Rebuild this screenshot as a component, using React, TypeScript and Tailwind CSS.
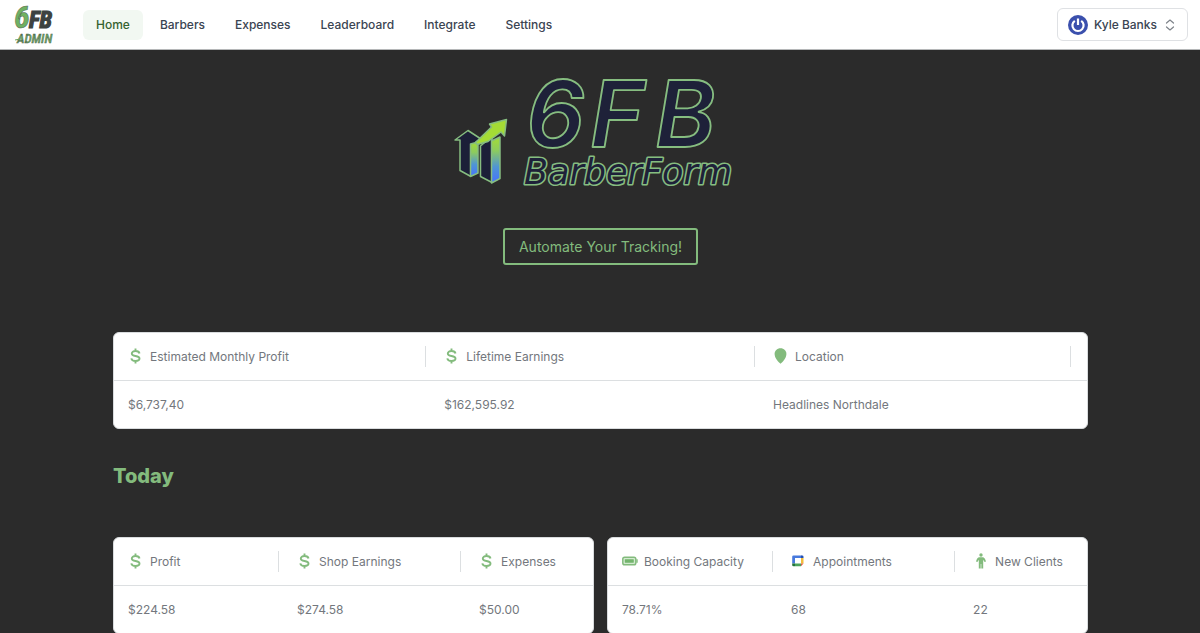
import type { ReactNode } from "react";

type Column = { icon: ReactNode; label: string; value: string; width: string; divided: boolean };

function DollarIcon() {
  return (
    <svg viewBox="0 0 16 16" className="size-4 shrink-0" fill="none" stroke="#83bb7d" strokeWidth="1.9" aria-hidden="true">
      <path d="M7.500.5v2.700M7.500 12.800v2.700M11.500 5.500C11.200 3.900 9.700 3 7.500 3 5.200 3 3.800 4 3.800 5.500c0 1.600 1.300 2.100 3.700 2.500 2.600.45 4 1 4 2.600C11.500 12.200 9.900 13 7.500 13c-2.400 0-3.900-1-4.200-2.700" />
    </svg>
  );
}

function PinIcon() {
  return (
    <svg viewBox="0 0 16 16" className="size-4 shrink-0" fill="#83bb7d" aria-hidden="true">
      <path d="M7.500.3c3.500 0 5.900 2.500 5.900 5.700 0 3.600-2.900 7.300-5.900 9.800-3-2.500-5.900-6.200-5.900-9.800C1.600 2.800 4 .3 7.500.3z" />
    </svg>
  );
}

function BatteryIcon() {
  return (
    <svg viewBox="0 0 16 16" className="size-4 shrink-0" fill="none" aria-hidden="true">
      <rect x=".8" y="4.200" width="13" height="7.600" rx="1.800" fill="#d3ead0" stroke="#83bb7d" strokeWidth="1.500" />
      <rect x="2.800" y="6.300" width="9" height="3.400" rx=".4" fill="#74b56d" />
      <path d="M15 6.200v3.600" stroke="#83bb7d" strokeWidth="1.400" />
    </svg>
  );
}

function CalendarIcon() {
  return (
    <svg viewBox="0 0 16 16" className="size-4 shrink-0" aria-hidden="true">
      <path d="M2.500 2.500h8v2.500H4v5.500H1.200V3.800a1.300 1.300 0 0 1 1.300-1.300z" fill="#4779dd" />
      <path d="M10 2.500h1.200a1.300 1.300 0 0 1 1.300 1.300V5H10z" fill="#2450b4" />
      <path d="M10 5h2.500v5.500H10z" fill="#f2bd3a" />
      <path d="M4 10.500h6v2.800H4z" fill="#4ba45b" />
      <path d="M1.200 10.500H4v2.800H2.500A1.300 1.300 0 0 1 1.200 12z" fill="#23733b" />
      <path d="M10 10.500h2.500L10 13.300z" fill="#dd5a47" />
    </svg>
  );
}

function PersonIcon() {
  return (
    <svg viewBox="0 0 16 16" className="size-4 shrink-0" fill="#83bb7d" aria-hidden="true">
      <circle cx="8" cy="2" r="1.700" />
      <path d="M6.300 4.300h3.400c1.500 0 2.300 1.500 3.300 4.100l-1.400.6-1.400-2.300V15.600H8.300v-4.700h-.6v4.700H5.800V6.700L4.400 9 3 8.400c1-2.600 1.800-4.100 3.300-4.100z" />
    </svg>
  );
}

function AdminLogo() {
  return (
    <svg viewBox="0 0 46 46" className="size-[46px] shrink-0 overflow-visible" role="img" aria-label="6FB Admin">
      <g fontFamily="Roboto Condensed, Roboto, sans-serif" fontStyle="italic" fontWeight="700">
        <text x="2" y="26" fontSize="32" fill="#6fb163" stroke="#55684f" strokeWidth=".5">6</text>
        <text x="17" y="26" fontSize="23" fill="#3d4241" stroke="#3d4241" strokeWidth="1.200">FB</text>
        <text x="5" y="41" fontSize="13" fontWeight="500" fill="#6aa562" stroke="#50624d" strokeWidth=".4">ADMIN</text>
      </g>
      <path d="M3 38l8-1.600" stroke="#6aa562" strokeWidth="1" />
    </svg>
  );
}

function BrandLogo() {
  return (
    <svg viewBox="0 -12 290 126" className="h-[126px] w-[290px] overflow-visible" role="img" aria-label="6FB BarberForm">
      <defs>
        <linearGradient id="bar" x1="0" y1="0" x2="0" y2="1">
          <stop offset="0" stopColor="#a4dc35" />
          <stop offset=".3" stopColor="#8ccb5e" />
          <stop offset=".65" stopColor="#4f95d4" />
          <stop offset="1" stopColor="#4572ff" />
        </linearGradient>
      </defs>
      <g stroke="#86bd80" strokeWidth="1.500" strokeLinejoin="round">
        <path d="M4 52L17 42.500 30 51l-5 3V84l-6 4-10-5.500V52z" fill="#1c1f38" />
        <path d="M19.500 56l7.500-2v31l-7.500 3.500z" fill="url(#bar)" />
        <path d="M29.500 58l9.500-8 2 1v43.500l-11.500-6z" fill="#1c1f38" />
        <path d="M40.500 53l8.500-4V90.500l-8.500 4.500z" fill="url(#bar)" />
        <path d="M24.500 54.500L40.500 39l-2-3L55.500 31.500 53.500 48l-3.500-4-13 9.500-11 3z" fill="#a4dc35" />
      </g>
      <g fill="#1e2139" stroke="#86bd80" strokeLinejoin="round" fontStyle="italic">
        <g fontFamily="Inter, sans-serif" fontWeight="600" fontSize="92" strokeWidth="1.800">
          <text x="75" y="59">6</text>
          <text x="139" y="59">F</text>
          <text x="204" y="59">B</text>
        </g>
        <text x="73" y="96" fontFamily="DejaVu Sans, sans-serif" fontSize="35" strokeWidth="3.200" paintOrder="stroke">BarberForm</text>
      </g>
    </svg>
  );
}

function StatsTable({ columns, label }: { columns: Column[]; label: string }) {
  return (
    <div className="overflow-hidden rounded-md border border-[#d9dcde] bg-white">
      <table aria-label={label} className="w-full table-fixed border-collapse text-left text-xs leading-5 text-[#73777d]">
        <thead>
          <tr className="border-b border-[#dcdfe1]">
            {columns.map((c) => (
              <th key={c.label} scope="col" className={`h-[47px] p-0 font-normal ${c.width}`}>
                <div className={c.divided ? "mr-1 flex h-[21px] items-center gap-1.5 border-r border-[#dcdfe1] pl-3.5" : "flex h-[21px] items-center gap-1.5 pl-3.5"}>
                  {c.icon}
                  <span className="pt-0.5 whitespace-nowrap">{c.label}</span>
                </div>
              </th>
            ))}
            <td className="p-0" />
          </tr>
        </thead>
        <tbody>
          <tr>
            {columns.map((c) => (
              <td key={c.label} className="h-12 pt-0.5 pr-0 pb-0 pl-3.5">{c.value}</td>
            ))}
            <td className="p-0" />
          </tr>
        </tbody>
      </table>
    </div>
  );
}

const overview: Column[] = [
  { icon: <DollarIcon />, label: "Estimated Monthly Profit", value: "$6,737,40", width: "w-[32.500%]", divided: true },
  { icon: <DollarIcon />, label: "Lifetime Earnings", value: "$162,595.92", width: "w-[33.800%]", divided: true },
  { icon: <PinIcon />, label: "Location", value: "Headlines Northdale", width: "w-[32.500%]", divided: true },
];

const earnings: Column[] = [
  { icon: <DollarIcon />, label: "Profit", value: "$224.58", width: "w-[35.300%]", divided: true },
  { icon: <DollarIcon />, label: "Shop Earnings", value: "$274.58", width: "w-[38%]", divided: true },
  { icon: <DollarIcon />, label: "Expenses", value: "$50.00", width: "w-[26%]", divided: false },
];

const bookings: Column[] = [
  { icon: <BatteryIcon />, label: "Booking Capacity", value: "78.71%", width: "w-[35.300%]", divided: true },
  { icon: <CalendarIcon />, label: "Appointments", value: "68", width: "w-[38%]", divided: true },
  { icon: <PersonIcon />, label: "New Clients", value: "22", width: "w-[26%]", divided: false },
];

const links = ["Home", "Barbers", "Expenses", "Leaderboard", "Integrate", "Settings"];

export default function App() {
  return (
    <div className="min-h-screen bg-[#2b2b2b] font-['Inter',sans-serif]">
      <header className="flex h-[50px] items-center border-b border-[#b5b7b8] bg-white pr-3 pl-3">
        <AdminLogo />
        <nav className="ml-[25px] flex gap-1">
          {links.map((l) => (
            <a
              key={l}
              href="#"
              aria-current={l === "Home" ? "page" : undefined}
              className={
                l === "Home"
                  ? "rounded-md bg-[#f2f8f2] px-[13px] py-[5px] text-xs leading-5 font-medium text-[#35622f]"
                  : "rounded-md px-[13px] py-[5px] text-xs leading-5 font-medium text-[#3a4452]"
              }
            >
              {l}
            </a>
          ))}
        </nav>
        <button type="button" className="ml-auto flex h-[33px] items-center rounded-md border border-[#dfe1e4] pr-3 pl-2.5 text-xs font-medium text-[#3a4452]">
          <svg viewBox="0 0 20 20" className="mr-1.5 size-5" fill="none" aria-hidden="true">
            <circle cx="10" cy="10" r="10" fill="#3b50ad" />
            <path d="M6.800 5.800a5.600 5.600 0 1 0 6.400 0" stroke="#fff" strokeWidth="2.200" />
            <path d="M10 3.500v6.500" stroke="#fff" strokeWidth="2.200" />
          </svg>
          Kyle Banks
          <svg viewBox="0 0 10 12" className="ml-2 h-3 w-2.5" fill="none" stroke="#7e838a" strokeWidth="1.200" strokeLinecap="round" strokeLinejoin="round" aria-hidden="true">
            <path d="M1.500 4L5 1l3.500 3M1.500 8L5 11l3.500-3" />
          </svg>
        </button>
      </header>
      <main className="pr-28 pl-[113px]">
        <div className="flex flex-col items-center pt-[26px]">
          <div className="pr-2.5">
            <BrandLogo />
          </div>
          <button type="button" className="mt-[26px] h-[37px] rounded-[3px] border-2 border-[#83bb7d] px-3.5 text-sm text-[#83bb7d]">
            Automate Your Tracking!
          </button>
        </div>
        <section className="mt-[67px]">
          <StatsTable columns={overview} label="Overview" />
        </section>
        <h2 className="mt-[31px] text-xl leading-8 font-extrabold text-[#83bb7d]">Today</h2>
        <section className="mt-[45px] grid grid-cols-2 gap-[13px]">
          <StatsTable columns={earnings} label="Earnings today" />
          <StatsTable columns={bookings} label="Bookings today" />
        </section>
      </main>
    </div>
  );
}
